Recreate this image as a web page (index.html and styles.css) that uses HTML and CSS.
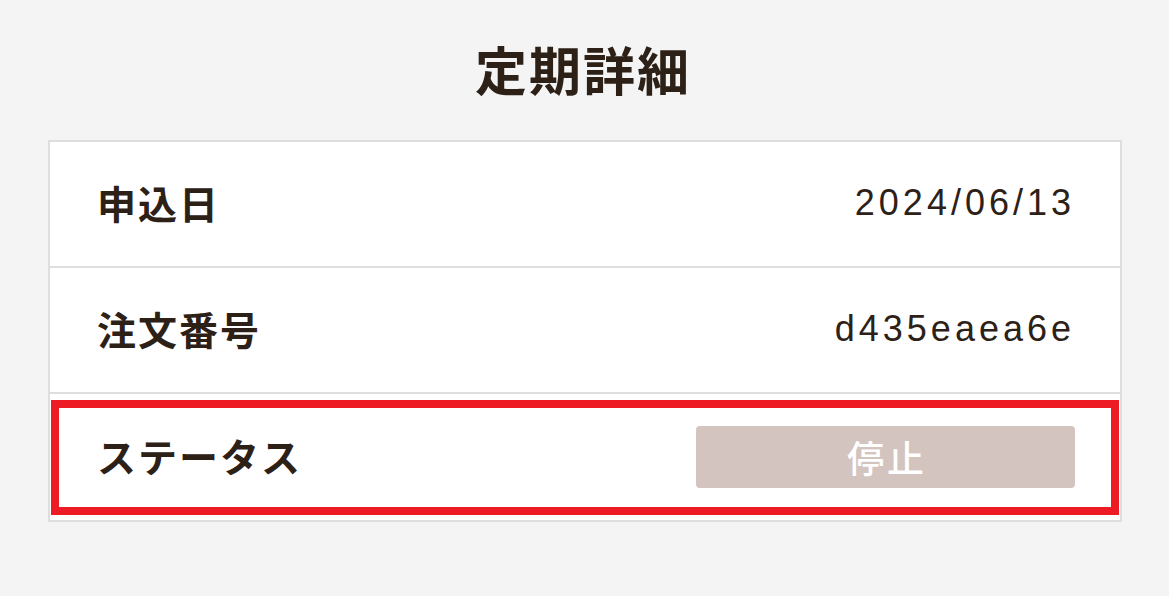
FILE: index.html
```html
<!DOCTYPE html>
<html lang="ja">
<head>
  <meta charset="utf-8">
  <title>定期詳細</title>
  <link rel="stylesheet" href="styles.css">
</head>
<body>
<div class="page">
  <h1 class="title">定期詳細</h1>
  <div class="detail-table">
    <div class="row">
      <div class="label">申込日</div>
      <div class="value">2024/06/13</div>
    </div>
    <div class="row">
      <div class="label">注文番号</div>
      <div class="value">d435eaea6e</div>
    </div>
    <div class="row status-row">
      <div class="label">ステータス</div>
      <div class="status-badge">停止</div>
      <div class="highlight"></div>
    </div>
  </div>
</div>
</body>
</html>
```

FILE: styles.css
```css
body {
  margin: 0;
  background-color: #f4f4f4;
  font-family: "Noto Sans CJK JP", "Noto Sans", sans-serif;
  color: #2d2117;
}

.page {
  padding: 0 47px 0 48px;
}

.title {
  margin: 0;
  height: 140px;
  display: flex;
  align-items: center;
  justify-content: center;
  padding-bottom: 4px;
  box-sizing: border-box;
  font-size: 52px;
  font-weight: bold;
  letter-spacing: 2px;
  padding-right: 4px;
}

.detail-table {
  background-color: #fff;
  border: 2px solid #dedede;
}

.row {
  position: relative;
  height: 124px;
  display: flex;
  align-items: center;
  justify-content: space-between;
  padding: 0 45px 0 47px;
  border-top: 2px solid #dedede;
}

.row:first-child {
  border-top: none;
}

.row:last-child {
  height: 126px;
}

.label {
  font-size: 39px;
  font-weight: bold;
  letter-spacing: 2px;
  padding-bottom: 4px;
}

.value {
  font-family: "Liberation Sans", Arial, sans-serif;
  font-size: 36px;
  letter-spacing: 4px;
  padding-bottom: 2px;
}

.status-badge {
  width: 379px;
  height: 62px;
  display: flex;
  align-items: center;
  justify-content: center;
  background-color: #d3c4bf;
  border-radius: 4px;
  color: #fff;
  font-size: 37px;
  font-weight: 500;
  letter-spacing: 3px;
  padding-left: 3px;
  box-sizing: border-box;
}

/* red annotation frame drawn over the status row */
.highlight {
  position: absolute;
  left: 1px;
  right: 1px;
  top: 6px;
  bottom: 5px;
  border: 8px solid #ed1c24;
  pointer-events: none;
}
```
